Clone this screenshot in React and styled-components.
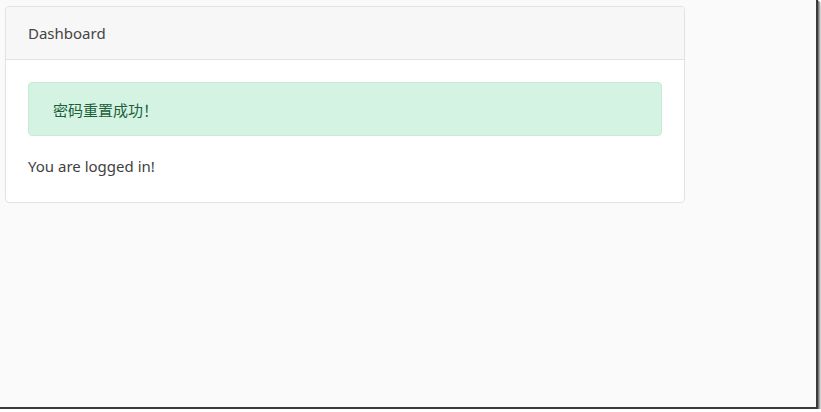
import React from "react";
import styled, { createGlobalStyle } from "styled-components";

const Global = createGlobalStyle`
  html, body { margin: 0; padding: 0; background: #ffffff; }
  body { font-family: "Noto Sans", "Noto Sans CJK SC", sans-serif; }
`;

const Frame = styled.div`
  box-sizing: border-box;
  width: 818px;
  height: 409px;
  background: #fafafa;
  padding: 6px 0 0 5px;
  border-right: 2px solid #3a3a3a;
  border-bottom: 2px solid #3a3a3a;
  box-shadow: 1px 1px 1px #7a7a7a, 2px 2px 1px #b0b0b0, 3px 3px 1px #dadada;
`;

const Card = styled.div`
  box-sizing: border-box;
  width: 680px;
  background: #ffffff;
  border: 1px solid #e2e2e2;
  border-radius: 4px;
  overflow: hidden;
`;

const CardHeader = styled.div`
  box-sizing: border-box;
  height: 53px;
  display: flex;
  align-items: center;
  padding: 0 22px 1px;
  background: #f7f7f7;
  border-bottom: 1px solid #e2e2e2;
  color: #444444;
  font-size: 15px;
`;

const CardBody = styled.div`
  padding: 22px 22px 23px;
  display: flex;
  flex-direction: column;
  gap: 18px;
`;

const Alert = styled.div`
  box-sizing: border-box;
  height: 54px;
  display: flex;
  align-items: center;
  padding: 0 24px;
  background: #d5f3e3;
  border: 1px solid #c6ecd8;
  border-radius: 4px;
  color: #1d5e3b;
  font-size: 15px;
  font-family: "Noto Sans CJK SC", "Noto Sans", sans-serif;
`;

const Text = styled.div`
  color: #3f3f3f;
  font-size: 15px;
  line-height: 25px;
`;

export default function App() {
  return (
    <>
      <Global />
      <Frame>
        <Card>
          <CardHeader>Dashboard</CardHeader>
          <CardBody>
            <Alert>密码重置成功！</Alert>
            <Text>You are logged in!</Text>
          </CardBody>
        </Card>
      </Frame>
    </>
  );
}
